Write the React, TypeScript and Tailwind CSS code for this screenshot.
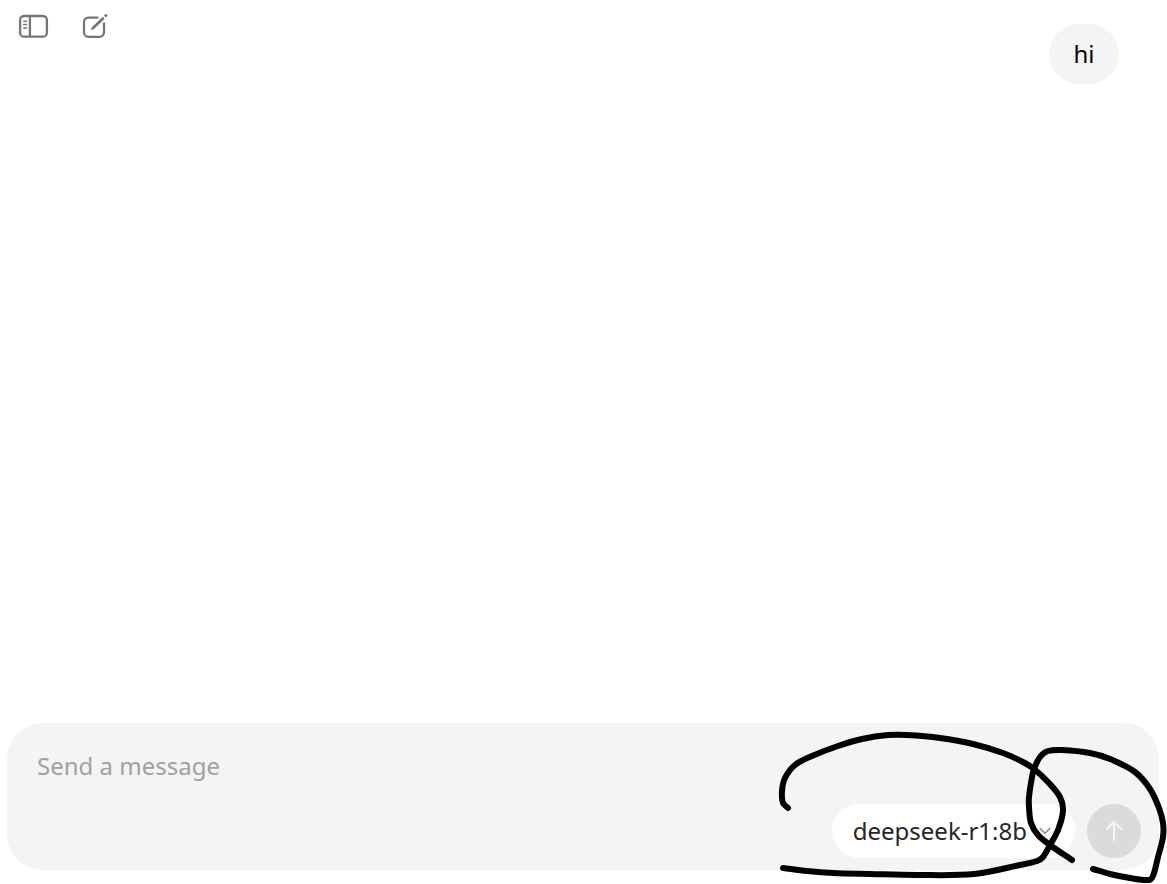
type Point = [number, number];

const pickerMark: Point[] = [
	[21, 88], [16, 83], [15, 71], [18, 58], [28, 45], [45, 36], [71, 26], [95, 19],
	[121, 15], [140, 15], [173, 18], [206, 24], [236, 33], [256, 42], [267, 49],
	[281, 62], [293, 77], [296, 91], [291, 110], [283, 125], [276, 137], [270, 141],
	[253, 145], [207, 154], [150, 155], [103, 154], [66, 153], [40, 151], [16, 148],
];

const sendMark: Point[] = [
	[305, 140], [283, 125], [271, 115], [264, 103], [262, 87], [262, 77], [265, 57],
	[267, 49], [273, 37], [281, 31], [295, 30], [323, 33], [343, 39], [368, 52],
	[383, 69], [392, 88], [396, 103], [396, 117], [391, 137], [386, 156], [382, 160],
	[363, 158], [343, 154], [326, 149],
];

// Turns a list of points into a smooth curve that passes through all of them
function smoothPath(points: Point[]) {
	let d = `M${points[0][0]} ${points[0][1]}`;
	for (let i = 0; i < points.length - 1; i++) {
		const before = points[Math.max(i - 1, 0)];
		const from = points[i];
		const to = points[i + 1];
		const after = points[Math.min(i + 2, points.length - 1)];
		const length = Math.hypot(to[0] - from[0], to[1] - from[1]);
		const span1 = Math.hypot(to[0] - before[0], to[1] - before[1]) || 1;
		const span2 = Math.hypot(after[0] - from[0], after[1] - from[1]) || 1;
		const k1 = length / 3 / span1;
		const k2 = length / 3 / span2;
		d += `C${from[0] + (to[0] - before[0]) * k1} ${from[1] + (to[1] - before[1]) * k1}`;
		d += ` ${to[0] - (after[0] - from[0]) * k2} ${to[1] - (after[1] - from[1]) * k2}`;
		d += ` ${to[0]} ${to[1]}`;
	}
	return d;
}

function SidebarIcon() {
	return (
		<svg width="31" height="26" viewBox="0 0 31 26" fill="none" stroke="currentColor" aria-hidden="true">
			<rect x="2.1" y="3" width="26.8" height="20.7" rx="4" strokeWidth="2.3" />
			<path d="M11.9 3v20.5" strokeWidth="2.3" />
			<path d="M5.7 8.3h2.8M5.7 11.6h2.8M5.7 15h2.8" strokeWidth="1.5" strokeLinecap="round" />
		</svg>
	);
}

function ComposeIcon() {
	return (
		<svg width="27" height="27" viewBox="0 0 27 27" fill="none" stroke="currentColor" strokeLinecap="round" aria-hidden="true">
			<path d="M16.5 4.6H7.500a4.500 4.500 0 0 0-4.500 4.500v10.200a4.500 4.500 0 0 0 4.500 4.500h11a4.500 4.500 0 0 0 4.500-4.500V10.500" strokeWidth="2.3" />
			<path d="M12.300 14.800 22 5.600" strokeWidth="2.8" />
			<path d="m10.900 16.200 1.800-1.700" strokeWidth="1.6" />
			<circle cx="24.900" cy="2.500" r="1.500" fill="currentColor" stroke="none" />
		</svg>
	);
}

function Toolbar() {
	return (
		<nav className="flex items-start gap-8 pl-[18px] pt-[13px] text-[#767676]">
			<button type="button" aria-label="Toggle sidebar">
				<SidebarIcon />
			</button>
			<button type="button" aria-label="New chat">
				<ComposeIcon />
			</button>
		</nav>
	);
}

function Composer() {
	return (
		<form className="mb-[14px] ml-[7px] mr-2 rounded-[36px] bg-[#f4f4f4] pb-3 pl-[30px] pr-[18px] pt-6">
			<input
				type="text"
				aria-label="Message"
				placeholder="Send a message"
				className="block h-9 w-full bg-transparent text-2xl outline-none placeholder:text-[#a1a1a1]"
			/>
			<div className="mt-[21px] flex items-center justify-end gap-3">
				<button
					type="button"
					className="flex h-[54px] items-center gap-3 rounded-full bg-white pl-[21px] pr-6 text-2xl text-[#262626]"
				>
					deepseek-r1:8b
					<svg width="12" height="8" viewBox="0 0 12 8" fill="none" stroke="#8a8a8a" strokeWidth="1.4" aria-hidden="true">
						<path d="m.7 1 5.3 5.3L11.3 1" />
					</svg>
				</button>
				<button
					type="button"
					aria-label="Send"
					className="flex size-[54px] items-center justify-center rounded-full bg-[#dbdbdb] text-[#f5f5f5]"
				>
					<svg
						width="18"
						height="22"
						viewBox="0 0 18 22"
						fill="none"
						stroke="currentColor"
						strokeWidth="2.2"
						strokeLinecap="round"
						strokeLinejoin="round"
						aria-hidden="true"
					>
						<path d="M9 20V2M1.8 9 9 1.8 16.2 9" />
					</svg>
				</button>
			</div>
		</form>
	);
}

// Freehand marks round the model picker and the send button
function PenMarks() {
	return (
		<svg
			className="pointer-events-none absolute bottom-0 right-0"
			width="400"
			height="164"
			viewBox="0 0 400 164"
			fill="none"
			stroke="#000"
			strokeWidth="6"
			strokeLinecap="round"
			strokeLinejoin="round"
			aria-hidden="true"
		>
			<path d={smoothPath(pickerMark)} />
			<path d={smoothPath(sendMark)} />
		</svg>
	);
}

function App() {
	return (
		<div className="relative flex min-h-screen flex-col bg-white font-['Noto_Sans',sans-serif] text-black">
			<div className="flex flex-1 items-start">
				<Toolbar />
				<main className="flex flex-1 flex-col items-end pr-12 pt-6">
					<p className="flex h-[60px] min-w-[70px] items-center justify-center rounded-[30px] bg-[#f4f4f4] px-6 text-2xl">
						hi
					</p>
				</main>
			</div>
			<Composer />
			<PenMarks />
		</div>
	);
}

export default App;
